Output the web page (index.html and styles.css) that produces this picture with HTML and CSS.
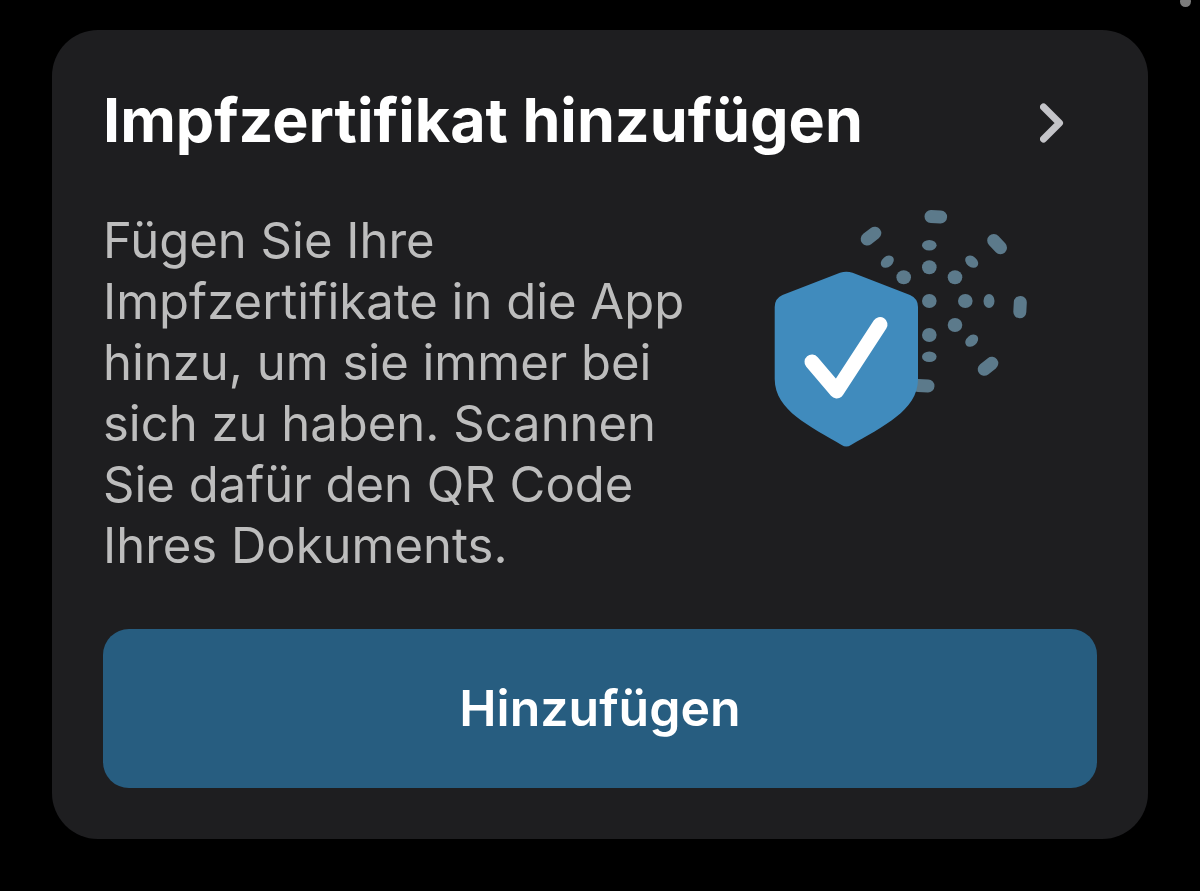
FILE: index.html
```html
<!DOCTYPE html>
<html lang="de">
    <head>
        <meta charset="UTF-8">
        <meta name="viewport" content="width=device-width, initial-scale=1">
        <title>Impfzertifikat hinzufügen</title>
        <link rel="stylesheet" href="styles.css">
    </head>
    <body>
        <span class="indicator"></span>

        <main class="card">
            <div class="card-header">
                <h1 class="card-title">Impfzertifikat hinzufügen</h1>
                <svg class="chevron" viewBox="0 0 24 40" aria-hidden="true">
                    <path d="M3.5 4 L19.5 20 L3.5 36" />
                </svg>
            </div>

            <div class="card-body">
                <p class="card-text">Fügen Sie Ihre Impfzertifikate in die App hinzu, um sie immer bei sich zu haben. Scannen Sie dafür den QR Code Ihres Dokuments.</p>
                <svg class="illustration" viewBox="0 1 254 238" aria-hidden="true">
                    <!-- virus -->
                    <g class="virus">
                        <ellipse cx="155.3" cy="92" rx="7.3" ry="7" />
                        <ellipse cx="155.3" cy="58.3" rx="7.3" ry="7" />
                        <ellipse cx="129.7" cy="68.3" rx="7.3" ry="7" />
                        <ellipse cx="181" cy="68.3" rx="7.3" ry="7" />
                        <ellipse cx="191.3" cy="92" rx="7.3" ry="7" />
                        <ellipse cx="181" cy="116" rx="7.3" ry="7" />
                        <ellipse cx="155.3" cy="126" rx="7.3" ry="7" />

                        <ellipse cx="155.3" cy="36.3" rx="7.3" ry="5.3" />
                        <ellipse cx="155.3" cy="147.7" rx="7.3" ry="5.3" />
                        <ellipse cx="215" cy="92" rx="5.5" ry="7" />
                        <ellipse cx="113.3" cy="52.7" rx="7.2" ry="5.3" transform="rotate(-40 113.3 52.7)" />
                        <ellipse cx="197.7" cy="52.7" rx="7.2" ry="5.3" transform="rotate(40 197.7 52.7)" />
                        <ellipse cx="197.7" cy="131.7" rx="7.2" ry="5.3" transform="rotate(-40 197.7 131.7)" />
                    </g>
                    <g class="spikes">
                        <path d="M157 7.5 L166.6 7.9" />
                        <path d="M93.2 30 L100.8 24.2" />
                        <path d="M219.7 31.5 L226.5 38.7" />
                        <path d="M246.3 93.4 L245.8 102.8" />
                        <path d="M210.2 160.3 L217.8 154.3" />
                        <path d="M144 176.6 L154 177" />
                    </g>
                    <!-- shield -->
                    <path class="shield" d="M66 63.8 Q72.3 61.5 78.6 63.8 L136 86 Q144 89.5 144 98 V170 C144 186 135 198 122 208 C111 217 91 228 77 236 Q72.3 239 67.6 236 C54 228 34 217 22.7 208 C10 198 0.7 186 0.7 170 V98 Q0.7 89.5 8.5 86 Z" />
                    <path class="check" d="M38 153 L62.7 182 L106 115.5" />
                </svg>
            </div>

            <button class="button" type="button">Hinzufügen</button>
        </main>
    </body>
</html>
```
FILE: styles.css
```css
html, body {
    margin: 0;
    padding: 0;
    background-color: #000;
    font-family: Inter, "Liberation Sans", sans-serif;
}
body {
    padding: 30px 52px 52px;
    position: relative;
}
.indicator {
    position: absolute;
    top: -4px;
    right: 9px;
    width: 11px;
    height: 11px;
    border-radius: 50%;
    background-color: #7d7d7d;
}
.card {
    padding: 52px 51px 51px;
    border-radius: 46px;
    background-color: #1e1e20;
}
.card-header {
    display: flex;
    align-items: center;
    justify-content: space-between;
    padding-right: 33px;
}
.card-title {
    margin: 0;
    color: #fff;
    font-size: 61px;
    font-weight: 700;
    line-height: 76px;
}
.chevron {
    width: 24px;
    height: 40px;
    margin-top: 6px;
    fill: none;
    stroke: #c4c4c8;
    stroke-width: 7;
    stroke-linecap: round;
    stroke-linejoin: round;
}
.card-body {
    display: flex;
    align-items: flex-start;
    gap: 64px;
    margin: 52px 0 53px;
    padding-right: 69px;
}
.card-text {
    flex: 1;
    margin: 0;
    color: #bdbdbd;
    font-size: 49px;
    line-height: 61px;
}
.illustration {
    flex: none;
    width: 254px;
    height: 238px;
}
.virus {
    fill: #5c7a8b;
}
.spikes {
    fill: none;
    stroke: #5c7a8b;
    stroke-width: 13;
    stroke-linecap: round;
}
.shield {
    fill: #408bbd;
}
.check {
    fill: none;
    stroke: #fff;
    stroke-width: 15;
    stroke-linecap: round;
    stroke-linejoin: round;
}
.button {
    display: block;
    width: 100%;
    padding: 50px 24px;
    border: none;
    border-radius: 26px;
    background-color: #275d80;
    color: #fff;
    font-family: inherit;
    font-size: 50px;
    font-weight: 600;
    line-height: 59px;
    cursor: pointer;
}
```
